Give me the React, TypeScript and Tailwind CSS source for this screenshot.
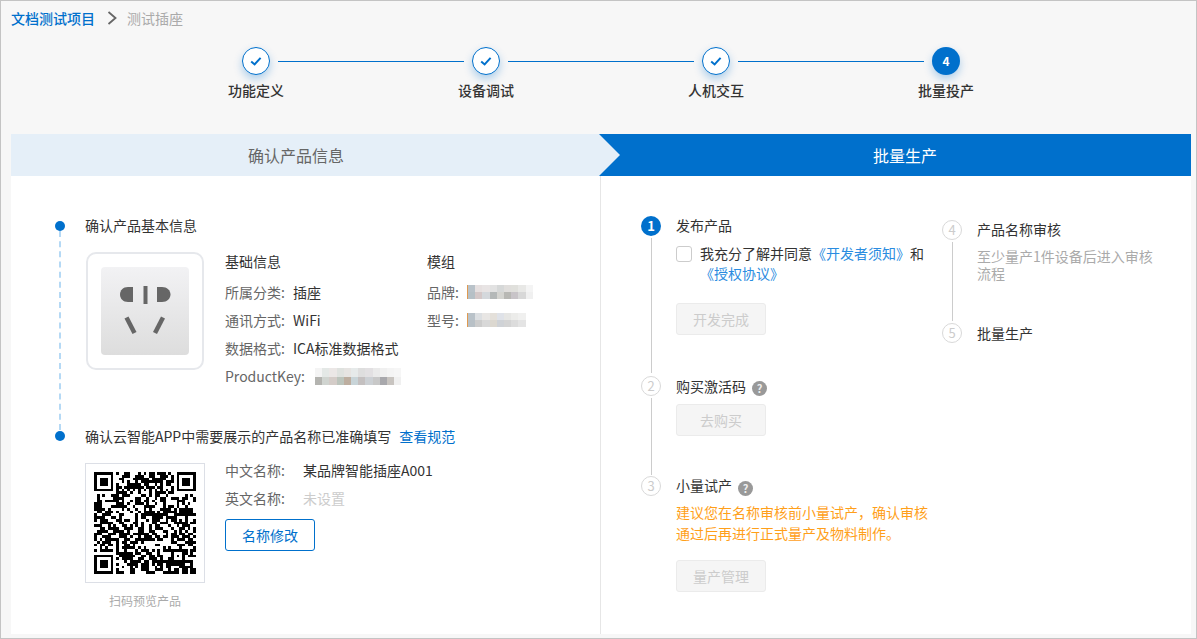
import React from "react";

const FONT = { fontFamily: '"Microsoft YaHei","Noto Sans CJK SC","Noto Sans",sans-serif' };

function Check() {
  return (
    <svg width="14" height="14" viewBox="0 0 14 14" fill="none">
      <path d="M2.2 7.4 L5.6 10.4 L11.6 3.8" stroke="#0070cc" strokeWidth="2" />
    </svg>
  );
}

function StepDot({ n }: { n?: number }) {
  if (n)
    return (
      <div className="flex h-7 w-7 shrink-0 items-center justify-center rounded-full bg-[#0070cc] text-[12px] font-bold text-white shadow-[0_4px_8px_rgba(0,112,204,0.3)]">
        {n}
      </div>
    );
  return (
    <div className="flex h-7 w-7 shrink-0 items-center justify-center rounded-full border border-[#0070cc] bg-white shadow-[0_4px_8px_rgba(0,112,204,0.3)]">
      <Check />
    </div>
  );
}

function Link() {
  return <div className="mx-2 h-px w-[186px] bg-[#0070cc]" />;
}

function Mosaic({ w, h, cell, colors }: { w: number; h: number; cell: number; colors: string[][] }) {
  return (
    <svg width={w} height={h} viewBox={`0 0 ${w} ${h}`} shapeRendering="crispEdges" className="block">
      {colors.map((row, y) =>
        row.map((c, x) => (
          <rect key={`${x}-${y}`} x={x * cell} y={y * (h / colors.length)} width={cell} height={h / colors.length} fill={c} />
        ))
      )}
    </svg>
  );
}

function buildQr() {
  const N = 37;
  const g: number[][] = Array.from({ length: N }, () => Array(N).fill(0));
  let s = 0x5a3c91;
  for (let y = 0; y < N; y++)
    for (let x = 0; x < N; x++) {
      s ^= (s << 13) & 0xffffffff;
      s ^= s >>> 17;
      s ^= (s << 5) & 0xffffffff;
      g[y][x] = (s >>> 3) % 100 < 58 ? 1 : 0;
    }
  const finder = (ox: number, oy: number) => {
    for (let y = -1; y < 8; y++)
      for (let x = -1; x < 8; x++) {
        const X = ox + x, Y = oy + y;
        if (X < 0 || Y < 0 || X >= N || Y >= N) continue;
        const on = x >= 0 && x < 7 && y >= 0 && y < 7 && (x === 0 || x === 6 || y === 0 || y === 6 || (x >= 2 && x <= 4 && y >= 2 && y <= 4));
        g[Y][X] = on ? 1 : 0;
      }
  };
  finder(0, 0);
  finder(N - 7, 0);
  finder(0, N - 7);
  for (let y = -2; y <= 2; y++)
    for (let x = -2; x <= 2; x++)
      g[30 + y][30 + x] = Math.max(Math.abs(x), Math.abs(y)) !== 1 ? 1 : 0;
  for (let i = 8; i < N - 8; i++) {
    g[6][i] = i % 2 === 0 ? 1 : 0;
    g[i][6] = i % 2 === 0 ? 1 : 0;
  }
  return g;
}

function Qr() {
  const g = buildQr();
  let d = "";
  g.forEach((row, y) => row.forEach((v, x) => { if (v) d += `M${x} ${y}h1v1h-1z`; }));
  return (
    <svg width="102" height="102" viewBox="0 0 37 37" shapeRendering="crispEdges">
      <path d={d} fill="#000" />
    </svg>
  );
}

function Socket() {
  return (
    <div className="flex h-[88px] w-[88px] items-center justify-center rounded-[4px] bg-gradient-to-b from-[#f2f2f4] to-[#dddddd]">
      <svg width="88" height="88" viewBox="0 0 88 88" fill="#666">
        <path d="M32 20 V35 H27 C22 35 19 31.5 19 27.5 C19 23.5 22 20 27 20 Z" />
        <rect x="42.5" y="19" width="4" height="18" />
        <path d="M56 20 V35 H61 C66 35 69.5 31.5 69.5 27.5 C69.5 23.5 66 20 61 20 Z" />
        <path d="M23.5 51.5 L27.5 49.5 L35.5 65 L31.5 67 Z" />
        <path d="M60 49.5 L64 51.5 L56 67 L52 65 Z" />
      </svg>
    </div>
  );
}

function Num({ n, active }: { n: number; active?: boolean }) {
  return active ? (
    <div className="flex h-5 w-5 shrink-0 items-center justify-center rounded-full bg-[#0070cc] text-[13px] font-bold text-white">{n}</div>
  ) : (
    <div className="flex h-5 w-5 shrink-0 items-center justify-center rounded-full border border-[#d9d9d9] bg-white text-[13px] text-[#cccccc]">{n}</div>
  );
}

function Help({ className }: { className: string }) {
  return (
    <span className={`ml-[6px] inline-flex h-[15px] w-[15px] items-center justify-center rounded-full bg-[#999999] text-[11px] font-bold leading-none text-[#eeeeee] ${className}`}>?</span>
  );
}

function DisabledBtn({ children, className = "" }: { children: React.ReactNode; className?: string }) {
  return (
    <div className={`flex h-8 w-[90px] items-center justify-center rounded-[3px] border border-[#ebebeb] bg-[#f5f5f5] text-[14px] text-[#cccccc] ${className}`}>
      {children}
    </div>
  );
}

const Row = ({ label, children }: { label: string; children: React.ReactNode }) => (
  <div className="flex h-7 items-center whitespace-nowrap">
    <span className="w-[68px] text-[#666666]">{label}</span>
    <span className="text-[#333333]">{children}</span>
  </div>
);

export default function App() {
  const brand = [
    ["#b9c2c9", "#e6e0e0", "#e8e4e4", "#e2e2e2", "#d6d8d8", "#e0dedc", "#e0e0dc", "#e8e8e6", "#f4f4f4"],
    ["#b6c0c6", "#d4c8c8", "#d4d8dc", "#b4b8b8", "#d4d4d0", "#b8b8b4", "#c8c4c8", "#d8d8d8", "#f0f0f0"],
  ];
  const model = [
    ["#b9c2c9", "#dcdfe2", "#e8e6e4", "#e4e0da", "#dfe2e8", "#e6e6e4", "#ececea", "#f0f0ef", "#ffffff"],
    ["#b8c0c6", "#cccccc", "#d8d8d8", "#dcd8d0", "#cfd2d6", "#d4d4d4", "#dcdcdc", "#e4e4e4", "#ffffff"],
  ];
  const pk = [
    ["#f4f4f4", "#e4e8e6", "#ebe7e6", "#dfe2df", "#e6e4e2", "#e6eaea", "#dedede", "#e2e0e2", "#eaeaea", "#f0f0f0", "#f4f4f4", "#f6f6f6"],
    ["#b4b4b0", "#d0d4d0", "#d4ccc8", "#bcc4bc", "#bdaea0", "#c8d4d8", "#c4c0c0", "#ccd0d4", "#c8c8c8", "#a8a8ac", "#c8c4c0", "#f0f0f0"],
  ];
  return (
    <div style={FONT} className="flex h-[639px] w-[1197px] flex-col overflow-hidden border border-[#c4c4c4] bg-[#f7f7f7] text-[14px]">
      <div className="flex h-[34px] items-center pl-[10px]">
        <span className="font-medium text-[#0070cc]">文档测试项目</span>
        <svg width="12" height="14" viewBox="0 0 12 14" fill="none" className="ml-[11px] mr-[9px]">
          <path d="M2.5 1 L9.5 7 L2.5 13" stroke="#666" strokeWidth="1.8" />
        </svg>
        <span className="text-[#aaaaaa]">测试插座</span>
      </div>

      <div className="mt-[12px] flex items-center pl-[241px]">
        <StepDot /><Link />
        <StepDot /><Link />
        <StepDot /><Link />
        <StepDot n={4} />
      </div>
      <div className="mt-[5px] flex pl-[140px]">
        {["功能定义", "设备调试", "人机交互", "批量投产"].map((t) => (
          <div key={t} className="h-5 w-[230px] text-center font-medium leading-5 text-[#333333]">{t}</div>
        ))}
      </div>

      <div className="mx-[10px] mt-[34px] flex h-[42px] w-[1180px] shrink-0">
        <div className="flex h-full w-[588px] items-center justify-center bg-[#e5eff8] pr-[18px] text-[16px] text-[#666666]">确认产品信息</div>
        <div className="relative flex h-full flex-1 items-center justify-center bg-[#0070cc] pl-[20px] text-[16px] text-white">
          <div className="absolute left-0 top-0 h-0 w-0 border-y-[21px] border-l-[21px] border-y-transparent border-l-[#e5eff8]" />
          批量生产
        </div>
      </div>

      <div className="mx-[10px] flex h-[458px] w-[1180px] shrink-0 bg-white">
        <div className="flex h-full w-[590px] flex-col border-r border-[#e6e6e6] pl-[44px] pt-[39px]">
          <div className="flex h-[211px]">
            <div className="-mb-1 flex w-[10px] flex-col items-center pt-[6px]">
              <div className="h-[10px] w-[10px] shrink-0 rounded-full bg-[#0070cc]" />
              <div className="flex-1 border-l-2 border-dashed border-[#b5d9f5]" />
            </div>
            <div className="ml-5">
              <div className="h-5 leading-5 text-[#333333]">确认产品基本信息</div>
              <div className="mt-[17px] flex">
                <div className="ml-px flex h-[118px] w-[118px] items-center justify-center rounded-[10px] border-2 border-[#e6e8ec] bg-white">
                  <Socket />
                </div>
                <div className="-mt-px ml-[21px] w-[202px]">
                  <div className="mb-[7px] h-5 leading-5 text-[#333333]">基础信息</div>
                  <Row label="所属分类:">插座</Row>
                  <Row label="通讯方式:">WiFi</Row>
                  <Row label="数据格式:">ICA标准数据格式</Row>
                  <div className="flex h-7 items-center whitespace-nowrap">
                    <span className="w-[90px] text-[#666666]">ProductKey:</span>
                    <Mosaic w={86} h={17} cell={7.2} colors={pk} />
                  </div>
                </div>
                <div className="-mt-px whitespace-nowrap">
                  <div className="mb-[7px] h-5 leading-5 text-[#333333]">模组</div>
                  <div className="flex h-7 items-center">
                    <span className="w-10 text-[#666666]">品牌:</span>
                    <div className="h-[14px] w-px bg-[#e09a50]" />
                    <Mosaic w={65} h={14} cell={7.2} colors={brand} />
                  </div>
                  <div className="flex h-7 items-center">
                    <span className="w-10 text-[#666666]">型号:</span>
                    <div className="h-[14px] w-px bg-[#e09a50]" />
                    <Mosaic w={61} h={14} cell={7.2} colors={model} />
                  </div>
                </div>
              </div>
            </div>
          </div>

          <div className="flex">
            <div className="w-[10px] pt-[5px]">
              <div className="h-[10px] w-[10px] rounded-full bg-[#0070cc]" />
            </div>
            <div className="ml-5">
              <div className="h-5 leading-5 text-[#333333]">
                确认云智能APP中需要展示的产品名称已准确填写
                <span className="ml-2 text-[#0070cc]">查看规范</span>
              </div>
              <div className="mt-[17px] flex">
                <div>
                  <div className="flex h-[120px] w-[120px] items-center justify-center border border-[#dcdfe6] bg-white">
                    <Qr />
                  </div>
                  <div className="mt-[9px] text-center text-[12px] leading-[18px] text-[#aaaaaa]">扫码预览产品</div>
                </div>
                <div className="-mt-[7px] ml-5">
                  <div className="flex h-7 items-center">
                    <span className="w-[78px] text-[#666666]">中文名称:</span>
                    <span className="text-[#333333]">某品牌智能插座A001</span>
                  </div>
                  <div className="flex h-7 items-center">
                    <span className="w-[78px] text-[#666666]">英文名称:</span>
                    <span className="text-[#cccccc]">未设置</span>
                  </div>
                  <div className="mt-[7px] flex h-8 w-[90px] items-center justify-center rounded-[3px] border border-[#0070cc] text-[#0070cc]">名称修改</div>
                </div>
              </div>
            </div>
          </div>
        </div>

        <div className="flex flex-1 pl-[40px] pt-[40px]">
          <div className="w-[301px]">
            <div className="flex h-[160px]">
              <div className="flex w-5 flex-col items-center">
                <Num n={1} active />
                <div className="mb-[3px] mt-[2px] flex-1 border-l border-[#cccccc]" />
              </div>
              <div className="ml-[15px] w-[252px]">
                <div className="-mt-px h-5 leading-5 text-[#333333]">发布产品</div>
                <div className="mt-[9px] flex">
                  <div className="mt-[2px] h-4 w-4 shrink-0 rounded-[3px] border border-[#cccccc]" />
                  <div className="-mt-px ml-2 w-[228px] leading-5 text-[#333333]">
                    我充分了解并同意<span className="text-[#2a8ce0]">《开发者须知》</span>和
                    <br />
                    <span className="text-[#2a8ce0]">《授权协议》</span>
                  </div>
                </div>
                <DisabledBtn className="mt-[20px]">开发完成</DisabledBtn>
              </div>
            </div>
            <div className="flex h-[100px]">
              <div className="flex w-5 flex-col items-center">
                <Num n={2} />
                <div className="mb-px mt-[2px] flex-1 border-l border-[#cccccc]" />
              </div>
              <div className="ml-[15px]">
                <div className="flex h-5 items-center leading-5 text-[#333333]">购买激活码<Help className="mt-[4px]" /></div>
                <DisabledBtn className="mt-2">去购买</DisabledBtn>
              </div>
            </div>
            <div className="flex">
              <div className="w-5"><Num n={3} /></div>
              <div className="ml-[15px] w-[256px]">
                <div className="-mt-px flex h-5 items-center leading-5 text-[#333333]">小量试产<Help className="mt-[6px]" /></div>
                <div className="mt-[7px] leading-[21px] text-[#ff9f1a]">建议您在名称审核前小量试产，确认审核通过后再进行正式量产及物料制作。</div>
                <DisabledBtn className="mt-[16px]">量产管理</DisabledBtn>
              </div>
            </div>
          </div>
          <div className="pt-1">
            <div className="flex h-[103px]">
              <div className="flex w-5 flex-col items-center">
                <Num n={4} />
                <div className="mb-[2px] mt-[2px] flex-1 border-l border-[#cccccc]" />
              </div>
              <div className="ml-[15px] w-[182px]">
                <div className="-mt-px h-5 leading-5 text-[#333333]">产品名称审核</div>
                <div className="mt-[9px] leading-[17px] text-[#aaaaaa]">至少量产1件设备后进入审核流程</div>
              </div>
            </div>
            <div className="flex">
              <Num n={5} />
              <div className="ml-[15px] h-5 leading-5 text-[#333333]">批量生产</div>
            </div>
          </div>
        </div>
      </div>
    </div>
  );
}
